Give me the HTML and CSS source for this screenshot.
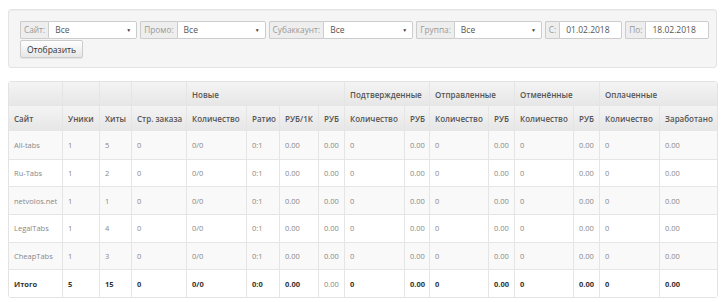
FILE: index.html
```html
<!DOCTYPE html>
<html lang="ru">
<head>
<meta charset="utf-8">
<link rel="stylesheet" href="styles.css">
</head>
<body>
<div class="panel">
  <div class="filters">
    <div class="group"><span class="addon">Сайт:</span><span class="select w89">Все<i class="caret">▼</i></span></div>
    <div class="group"><span class="addon">Промо:</span><span class="select w89">Все<i class="caret">▼</i></span></div>
    <div class="group"><span class="addon">Субаккаунт:</span><span class="select w90">Все<i class="caret">▼</i></span></div>
    <div class="group"><span class="addon">Группа:</span><span class="select w88">Все<i class="caret">▼</i></span></div>
    <div class="group"><span class="addon">С:</span><span class="input w62">01.02.2018</span></div>
    <div class="group"><span class="addon">По:</span><span class="input w63">18.02.2018</span></div>
  </div>
  <button class="btn">Отобразить</button>
</div>

<table class="stats">
  <colgroup>
    <col style="width:53px"><col style="width:37px"><col style="width:32px"><col style="width:55px">
    <col style="width:60px"><col style="width:33px"><col style="width:39px"><col style="width:26px">
    <col style="width:60px"><col style="width:25px">
    <col style="width:59px"><col style="width:26px">
    <col style="width:59px"><col style="width:26px">
    <col style="width:60px"><col style="width:58px">
  </colgroup>
  <thead>
    <tr class="h1">
      <th></th><th></th><th></th><th></th>
      <th colspan="4">Новые</th>
      <th colspan="2">Подтвержденные</th>
      <th colspan="2">Отправленные</th>
      <th colspan="2">Отменённые</th>
      <th colspan="2">Оплаченные</th>
    </tr>
    <tr class="h2">
      <th>Сайт</th><th>Уники</th><th>Хиты</th><th>Стр. заказа</th>
      <th>Количество</th><th>Ратио</th><th>РУБ/1К</th><th>РУБ</th>
      <th>Количество</th><th>РУБ</th>
      <th>Количество</th><th>РУБ</th>
      <th>Количество</th><th>РУБ</th>
      <th>Количество</th><th>Заработано</th>
    </tr>
  </thead>
  <tbody>
    <tr><td>All-tabs</td><td>1</td><td>5</td><td>0</td><td>0/0</td><td>0:1</td><td>0.00</td><td>0.00</td><td>0</td><td>0.00</td><td>0</td><td>0.00</td><td>0</td><td>0.00</td><td>0</td><td>0.00</td></tr>
    <tr><td>Ru-Tabs</td><td>1</td><td>2</td><td>0</td><td>0/0</td><td>0:1</td><td>0.00</td><td>0.00</td><td>0</td><td>0.00</td><td>0</td><td>0.00</td><td>0</td><td>0.00</td><td>0</td><td>0.00</td></tr>
    <tr><td>netvolos.net</td><td>1</td><td>1</td><td>0</td><td>0/0</td><td>0:1</td><td>0.00</td><td>0.00</td><td>0</td><td>0.00</td><td>0</td><td>0.00</td><td>0</td><td>0.00</td><td>0</td><td>0.00</td></tr>
    <tr><td>LegalTabs</td><td>1</td><td>4</td><td>0</td><td>0/0</td><td>0:1</td><td>0.00</td><td>0.00</td><td>0</td><td>0.00</td><td>0</td><td>0.00</td><td>0</td><td>0.00</td><td>0</td><td>0.00</td></tr>
    <tr><td>CheapTabs</td><td>1</td><td>3</td><td>0</td><td>0/0</td><td>0:1</td><td>0.00</td><td>0.00</td><td>0</td><td>0.00</td><td>0</td><td>0.00</td><td>0</td><td>0.00</td><td>0</td><td>0.00</td></tr>
    <tr class="total"><td>Итого</td><td>5</td><td>15</td><td>0</td><td>0/0</td><td>0:0</td><td>0.00</td><td class="plain">0.00</td><td>0</td><td>0.00</td><td>0</td><td>0.00</td><td>0</td><td>0.00</td><td>0</td><td>0.00</td></tr>
  </tbody>
</table>
</body>
</html>
```
FILE: styles.css
```css
* { box-sizing: border-box; }
body {
  margin: 0;
  padding: 9px 8px 0 8px;
  background: #fff;
  font-family: "Open Sans", "Liberation Sans", sans-serif;
  font-size: 8.5px;
  color: #555;
}
.panel {
  width: 709px;
  height: 59px;
  background: #f5f5f5;
  border: 1px solid #e3e3e3;
  border-radius: 3px;
  padding: 11px 11px 0 11px;
  box-shadow: inset 0 1px 1px rgba(0,0,0,0.03);
}
.filters {
  display: flex;
  gap: 3px;
  height: 18px;
}
.group {
  display: flex;
  height: 18px;
}
.addon {
  display: flex;
  align-items: center;
  padding: 0 3px;
  background: #eee;
  border: 1px solid #ccc;
  border-right: 0;
  border-radius: 2px 0 0 2px;
  color: #999;
  font-size: 8.3px;
  line-height: 1;
}
.select, .input {
  position: relative;
  display: flex;
  align-items: center;
  padding: 0 6px;
  background: #fff;
  border: 1px solid #ccc;
  border-radius: 0 2px 2px 0;
  color: #555;
  line-height: 1;
}
.caret {
  position: absolute;
  right: 5px;
  top: 6px;
  font-style: normal;
  font-size: 5px;
  color: #444;
}
.w89 { width: 89px; }
.w90 { width: 90px; }
.w88 { width: 88px; }
.w62 { width: 63px; }
.w63 { width: 64px; }
.btn {
  display: block;
  margin-top: 1px;
  height: 18px;
  width: 63px;
  padding: 0;
  font-family: inherit;
  font-size: 8.5px;
  color: #333;
  background: linear-gradient(#fff, #e6e6e6);
  border: 1px solid #ccc;
  border-radius: 2px;
  box-shadow: inset 0 1px 0 rgba(255,255,255,.15), 0 1px 1px rgba(0,0,0,.075);
}
.stats {
  margin-top: 13px;
  width: 708px;
  table-layout: fixed;
  border-collapse: separate;
  border-spacing: 0;
  border: 1px solid #e3e3e3;
  border-radius: 3px;
}
.stats th, .stats td {
  text-align: left;
  padding: 0 5px;
  border-left: 1px solid #e5e5e5;
  white-space: nowrap;
  overflow: hidden;
}
.stats th:first-child, .stats td:first-child { border-left: 0; }
.stats th {
  font-size: 8px;
  font-weight: 600;
  color: #555;
  background: linear-gradient(#f4f4f4, #e6e6e6);
}
.stats tr.h1 th { height: 24px; }
.stats tr.h2 th { height: 25px; }
.stats td {
  height: 27.67px;
  font-size: 7.5px;
  color: #888;
  border-top: 1px solid #e5e5e5;
}
.stats tbody tr:first-child td { border-top: 0; }
.stats tbody tr:nth-child(odd) td { background: #f9f9f9; }
.stats tbody tr.total td { background: #fff; font-weight: 700; color: #333; }
.stats tbody tr.total td.plain { font-weight: 400; color: #888; }
```
